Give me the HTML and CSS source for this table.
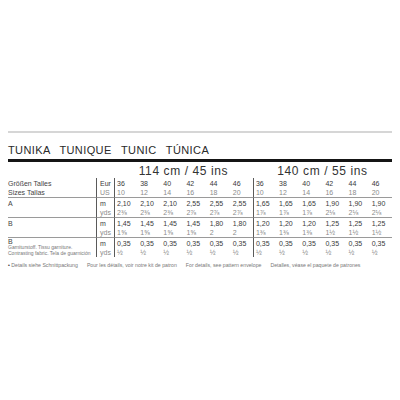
FILE: index.html
```html
<!DOCTYPE html>
<html lang="de">
<head>
<meta charset="utf-8">
<title>Tunika</title>
<link rel="stylesheet" href="styles.css">
</head>
<body>
<div class="page">
  <div class="rule-light"></div>
  <h1 class="title">TUNIKA TUNIQUE TUNIC TÚNICA</h1>
  <div class="rule-heavy"></div>
  <table class="chart">
    <colgroup>
      <col class="c-label"><col class="c-unit">
      <col class="c-size"><col class="c-size"><col class="c-size"><col class="c-size"><col class="c-size"><col class="c-size">
      <col class="c-size"><col class="c-size"><col class="c-size"><col class="c-size"><col class="c-size"><col class="c-size">
    </colgroup>
    <thead>
      <tr>
        <th colspan="2"></th>
        <th colspan="6" class="width">114 cm / 45 ins</th>
        <th colspan="6" class="width">140 cm / 55 ins</th>
      </tr>
    </thead>
    <tbody>
      <tr class="first">
        <td class="label"><div>Größen Talles</div><div>Sizes Tallas</div></td>
        <td class="unit"><div>Eur</div><div class="lt">US</div></td>
        <td class="gs"><div>36</div><div class="lt">10</div></td>
        <td><div>38</div><div class="lt">12</div></td>
        <td><div>40</div><div class="lt">14</div></td>
        <td><div>42</div><div class="lt">16</div></td>
        <td><div>44</div><div class="lt">18</div></td>
        <td><div>46</div><div class="lt">20</div></td>
        <td class="gs"><div>36</div><div class="lt">10</div></td>
        <td><div>38</div><div class="lt">12</div></td>
        <td><div>40</div><div class="lt">14</div></td>
        <td><div>42</div><div class="lt">16</div></td>
        <td><div>44</div><div class="lt">18</div></td>
        <td><div>46</div><div class="lt">20</div></td>
      </tr>
      <tr>
        <td class="label"><div>A</div></td>
        <td class="unit"><div>m</div><div class="lt">yds</div></td>
        <td class="gs"><div>2,10</div><div class="lt">2⅜</div></td>
        <td><div>2,10</div><div class="lt">2⅜</div></td>
        <td><div>2,10</div><div class="lt">2⅜</div></td>
        <td><div>2,55</div><div class="lt">2⅞</div></td>
        <td><div>2,55</div><div class="lt">2⅞</div></td>
        <td><div>2,55</div><div class="lt">2⅞</div></td>
        <td class="gs"><div>1,65</div><div class="lt">1⅞</div></td>
        <td><div>1,65</div><div class="lt">1⅞</div></td>
        <td><div>1,65</div><div class="lt">1⅞</div></td>
        <td><div>1,90</div><div class="lt">2⅛</div></td>
        <td><div>1,90</div><div class="lt">2⅛</div></td>
        <td><div>1,90</div><div class="lt">2⅛</div></td>
      </tr>
      <tr>
        <td class="label"><div>B</div></td>
        <td class="unit"><div>m</div><div class="lt">yds</div></td>
        <td class="gs"><div>1,45</div><div class="lt">1⅝</div></td>
        <td><div>1,45</div><div class="lt">1⅝</div></td>
        <td><div>1,45</div><div class="lt">1⅝</div></td>
        <td><div>1,45</div><div class="lt">1⅝</div></td>
        <td><div>1,80</div><div class="lt">2</div></td>
        <td><div>1,80</div><div class="lt">2</div></td>
        <td class="gs"><div>1,20</div><div class="lt">1⅜</div></td>
        <td><div>1,20</div><div class="lt">1⅜</div></td>
        <td><div>1,20</div><div class="lt">1⅜</div></td>
        <td><div>1,25</div><div class="lt">1½</div></td>
        <td><div>1,25</div><div class="lt">1½</div></td>
        <td><div>1,25</div><div class="lt">1½</div></td>
      </tr>
      <tr>
        <td class="label"><div class="b">B</div><div class="sub">Garniturstoff. Tissu garniture.</div><div class="sub">Contrasting fabric. Tela de guarnición</div></td>
        <td class="unit"><div>m</div><div class="lt">yds</div></td>
        <td class="gs"><div>0,35</div><div class="lt">½</div></td>
        <td><div>0,35</div><div class="lt">½</div></td>
        <td><div>0,35</div><div class="lt">½</div></td>
        <td><div>0,35</div><div class="lt">½</div></td>
        <td><div>0,35</div><div class="lt">½</div></td>
        <td><div>0,35</div><div class="lt">½</div></td>
        <td class="gs"><div>0,35</div><div class="lt">½</div></td>
        <td><div>0,35</div><div class="lt">½</div></td>
        <td><div>0,35</div><div class="lt">½</div></td>
        <td><div>0,35</div><div class="lt">½</div></td>
        <td><div>0,35</div><div class="lt">½</div></td>
        <td><div>0,35</div><div class="lt">½</div></td>
      </tr>
    </tbody>
  </table>
  <div class="note">
    <span><span class="bullet">•</span> Details siehe Schnittpackung</span>
    <span>Pour les détails, voir notre kit de patron</span>
    <span>For details, see pattern envelope</span>
    <span>Detalles, véase el paquete de patrones</span>
  </div>
</div>
</body>
</html>
```

FILE: styles.css
```css
html, body {
  margin: 0;
  padding: 0;
  background: #ffffff;
}

.page {
  width: 384px;
  padding: 131px 8px 0 8px;
  font-family: "Liberation Sans", Arial, sans-serif;
  color: #333333;
}

.rule-light {
  height: 0;
  border-top: 2px solid #d6d6d6;
}

.title {
  margin: 11px 0 0 0;
  font-size: 11px;
  line-height: 12px;
  font-weight: normal;
  letter-spacing: 0.4px;
  word-spacing: 6px;
  color: #2a2a2a;
}

.rule-heavy {
  margin-top: 3px;
  height: 3px;
  background: #151515;
}

.chart {
  margin-top: 2px;
  width: 384px;
  table-layout: fixed;
  border-collapse: separate;
  border-spacing: 0;
}

.c-label { width: 88px; }
.c-unit { width: 18px; }

.chart th {
  padding: 0;
  font-weight: normal;
}

.width {
  font-size: 12px;
  line-height: 14px;
  letter-spacing: 0.6px;
  text-align: center;
  color: #333333;
  white-space: nowrap;
}

.chart td {
  vertical-align: top;
  padding: 1px 0 0 3px;
  font-size: 7px;
  color: #3a3a3a;
  border-top: 1px solid #9a9a9a;
  white-space: nowrap;
  overflow: visible;
}

.chart tr.first td {
  border-top: none;
}

.chart td div {
  line-height: 9px;
}

.chart td.label {
  padding-left: 0;
  color: #444444;
}

.chart td.unit,
.chart td.gs {
  border-left: 1px solid #5a5a5a;
}

.chart td.gs {
  padding-left: 2px;
}

.chart td .lt {
  color: #8c8c8c;
}

.chart td.label .b {
  line-height: 6px;
}

.chart td.label .sub {
  font-size: 5px;
  line-height: 5.5px;
  color: #777777;
}

.note {
  margin-top: 4px;
  display: flex;
  gap: 9px;
  font-size: 5.2px;
  line-height: 8px;
  color: #777777;
  white-space: nowrap;
}

.bullet {
  color: #333333;
}
```
